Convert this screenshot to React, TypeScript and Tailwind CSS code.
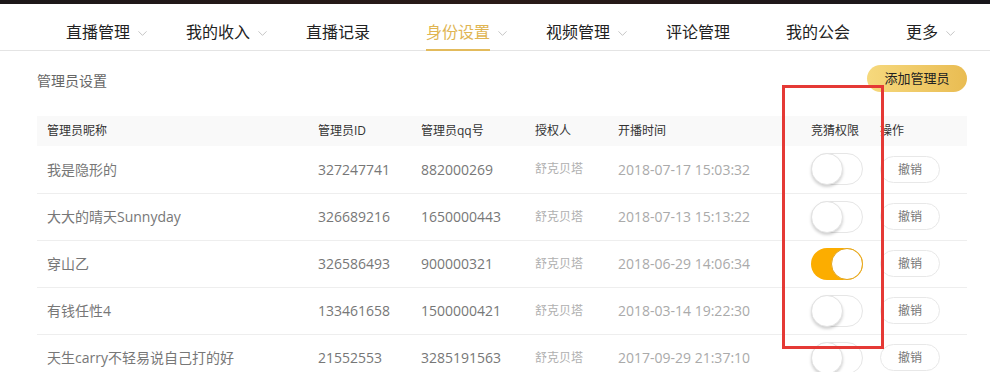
import { ChevronDown } from "lucide-react";

const navItems = [
  { label: "直播管理", dropdown: true },
  { label: "我的收入", dropdown: true },
  { label: "直播记录", dropdown: false },
  { label: "身份设置", dropdown: true, active: true },
  { label: "视频管理", dropdown: true },
  { label: "评论管理", dropdown: false },
  { label: "我的公会", dropdown: false },
  { label: "更多", dropdown: true },
];

const admins = [
  { name: "我是隐形的", id: "327247741", qq: "882000269", by: "舒克贝塔", time: "2018-07-17 15:03:32", on: false },
  { name: "大大的晴天Sunnyday", id: "326689216", qq: "1650000443", by: "舒克贝塔", time: "2018-07-13 15:13:22", on: false },
  { name: "穿山乙", id: "326586493", qq: "900000321", by: "舒克贝塔", time: "2018-06-29 14:06:34", on: true },
  { name: "有钱任性4", id: "133461658", qq: "1500000421", by: "舒克贝塔", time: "2018-03-14 19:22:30", on: false },
  { name: "天生carry不轻易说自己打的好", id: "21552553", qq: "3285191563", by: "舒克贝塔", time: "2017-09-29 21:37:10", on: false },
];

function Toggle({ on }: { on: boolean }) {
  return (
    <div
      className={
        on
          ? "relative h-[32px] w-[52px] rounded-full bg-[#fcad00]"
          : "relative h-[32px] w-[52px] rounded-full border border-[#e6e6e6] bg-white"
      }
    >
      <div
        className={
          on
            ? "absolute right-0 top-0 h-[32px] w-[32px] rounded-full border border-[#e3a51c] bg-white"
            : "absolute -left-px -top-px h-[32px] w-[32px] rounded-full border border-[#e3e3e3] bg-white shadow-[0_2px_3px_rgba(0,0,0,0.18)]"
        }
      />
    </div>
  );
}

export default function App() {
  return (
    <div className="relative h-[372px] w-[990px] overflow-hidden bg-white font-['Open_Sans','Noto_Sans_CJK_SC',sans-serif]">
      <div className="h-[4px] bg-gradient-to-r from-[#1c1719] via-[#2a1a17] to-[#18161b]" />

      <nav className="flex h-[47px] border-b border-[#e4e4e4] pl-[66px]">
        {navItems.map((item) => (
          <div key={item.label} className="relative flex w-[120px] shrink-0 items-center pt-[10px]">
            <span className={item.active ? "text-[16px] text-[#e0b552]" : "text-[16px] text-[#222]"}>
              {item.label}
            </span>
            {item.dropdown && (
              <ChevronDown size={15} strokeWidth={1.1} className="ml-[5px] mt-[2px] text-[#aaa]" />
            )}
            {item.active && (
              <div className="absolute bottom-[-1px] left-0 h-[2px] w-[64px] bg-[#e3bb5c]" />
            )}
          </div>
        ))}
      </nav>

      <div className="pl-[37px] pr-[23px] pt-[14px]">
        <div className="flex items-center justify-between">
          <span className="mt-[3px] text-[14px] text-[#666]">管理员设置</span>
          <button className="h-[27px] w-[100px] rounded-full bg-gradient-to-r from-[#f6d97d] to-[#e9bc52] text-[13px] text-[#222]">
            添加管理员
          </button>
        </div>

        <table className="mt-[24px] w-[930px] border-collapse text-left">
          <thead>
            <tr className="h-[30px] bg-[#f9f9f9] text-[12px] text-[#333]">
              <th className="w-[281px] pl-[10px] font-normal">管理员昵称</th>
              <th className="w-[103px] font-normal">管理员ID</th>
              <th className="w-[114px] font-normal">管理员qq号</th>
              <th className="w-[83px] font-normal">授权人</th>
              <th className="w-[193px] font-normal">开播时间</th>
              <th className="w-[69px] font-normal">竞猜权限</th>
              <th className="font-normal">操作</th>
            </tr>
          </thead>
          <tbody>
            {admins.map((a) => (
              <tr key={a.id} className="h-[47px] border-b border-[#eeeeee]">
                <td className="pl-[10px] text-[14px] text-[#777]">{a.name}</td>
                <td className="text-[14px] text-[#777]">{a.id}</td>
                <td className="text-[14px] text-[#777]">{a.qq}</td>
                <td className="text-[12px] text-[#b0b0b0]">{a.by}</td>
                <td className="text-[14px] text-[#aaa]">{a.time}</td>
                <td>
                  <Toggle on={a.on} />
                </td>
                <td>
                  <button className="h-[27px] w-[60px] rounded-full border border-[#e8e8e8] text-[12px] text-[#777]">
                    撤销
                  </button>
                </td>
              </tr>
            ))}
          </tbody>
        </table>
      </div>

      <div className="absolute left-[782px] top-[85px] h-[264px] w-[102px] border-[3px] border-[#e53935]" />
    </div>
  );
}
